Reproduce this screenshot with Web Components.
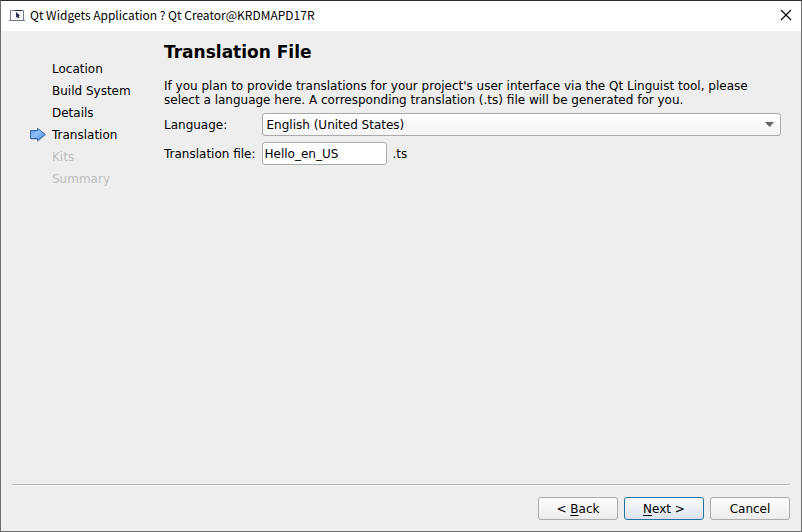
<!DOCTYPE html>
<html lang="en">
<head>
<meta charset="utf-8">
<title>Qt Widgets Application</title>
<style>
html, body { height: 100%; margin: 0; }
body { font: 12px/14px "DejaVu Sans", sans-serif; color: #000; background: #eee; }
</style>
</head>
<body>
<wizard-window>
  <title-bar slot="title">Qt Widgets Application ? Qt Creator@KRDMAPD17R</title-bar>
  <step-list slot="steps">
    <wizard-step>Location</wizard-step>
    <wizard-step>Build System</wizard-step>
    <wizard-step>Details</wizard-step>
    <wizard-step current>Translation</wizard-step>
    <wizard-step pending>Kits</wizard-step>
    <wizard-step pending>Summary</wizard-step>
  </step-list>
  <translation-page></translation-page>
  <wizard-button slot="actions">&lt; <u>B</u>ack</wizard-button>
  <wizard-button slot="actions" primary><u>N</u>ext &gt;</wizard-button>
  <wizard-button slot="actions">Cancel</wizard-button>
</wizard-window>
<script>
const define = (name, html) => {
  const template = document.createElement('template');
  template.innerHTML = html;
  customElements.define(name, class extends HTMLElement {
    constructor() {
      super();
      this.attachShadow({ mode: 'open' }).append(template.content.cloneNode(true));
    }
  });
};

define('wizard-window', `
<style>
:host { display: flex; flex-direction: column; min-height: 100vh; box-sizing: border-box;
  border: 1px solid #6e6e6e; border-top-color: #2b2a2c; background: #eee; }
.body { flex: 1; display: grid; grid-template-columns: 132px minmax(0, 1fr); gap: 0 20px; padding: 11px 20px 0 11px; }
footer { margin: 0 11px; padding: 12px 0 11px; display: flex; justify-content: flex-end; gap: 6px;
  border-top: 1px solid #b4b4b4; box-shadow: inset 0 1px #fff; }
</style>
<slot name="title"></slot>
<div class="body"><slot name="steps"></slot><main><slot></slot></main></div>
<footer><slot name="actions"></slot></footer>`);

define('title-bar', `
<style>
:host { display: flex; align-items: center; height: 28px; padding: 0 9px 2px 8px; background: #fff;
  font-family: "Noto Sans CJK KR", sans-serif; font-size: 12px; line-height: 16px; }
span { flex: 1; margin-left: 5px; }
button { border: 0; padding: 0; background: none; width: 12px; height: 12px; }
svg { display: block; }
</style>
<svg width="16" height="12" viewBox="0 0 16 12" aria-hidden="true">
  <path d="M1.500 11V1.500h13V11" fill="#f6f8fa" stroke="#737d90"/>
  <path d="M6 1h7v1H6z" fill="#27344c"/>
  <path d="M0 11h16v1H0z" fill="#737d90"/>
  <path d="M7 3l4 3.500-1.300.500.8 1.800-1.500.700-.8-1.800L7 8.500z" fill="#27344c"/>
</svg>
<span><slot></slot></span>
<button type="button" aria-label="Close"><svg width="12" height="12" viewBox="0 0 12 12"><path d="M1 1l10 10M11 1L1 11" stroke="#000" stroke-width="1.100" fill="none"/></svg></button>`);

define('step-list', `
<style>
nav { display: grid; gap: 8px; padding: 20px 0 0 17px; }
</style>
<nav aria-label="Steps"><slot></slot></nav>`);

define('wizard-step', `
<style>
:host { display: grid; grid-template-columns: 17px 1fr; gap: 6px; align-items: center; height: 14px; }
:host([pending]) { color: #bebebe; }
svg { visibility: hidden; display: block; }
:host([current]) svg { visibility: visible; }
</style>
<svg width="17" height="14" viewBox="0 0 17 14" aria-hidden="true">
  <defs><linearGradient id="blue" x1="0" y1="0" x2="1" y2="1"><stop offset="0" stop-color="#5a9cf0"/><stop offset=".45" stop-color="#8fbffa"/><stop offset="1" stop-color="#3f86e8"/></linearGradient></defs>
  <path d="M1.500 11.500h7.500v2l7.500-6" fill="none" stroke="#c8c8c8"/>
  <path d="M1.500 2.500h7V.3L16.300 6.500 8.500 12.700v-2.200h-7z" fill="url(#blue)" stroke="#36639f"/>
</svg>
<span><slot></slot></span>`);

define('translation-page', `
<style>
:host { display: block; }
h1 { font-size: 17px; line-height: 20px; margin: 0 0 17px; }
p { margin: 0 0 6px; max-width: 600px; }
form { display: grid; grid-template-columns: auto minmax(0, 1fr); gap: 6px; align-items: center; }
.combo { position: relative; }
select, input { font: inherit; color: inherit; box-sizing: border-box; height: 23px; margin: 0;
  border: 1px solid #ababab; border-radius: 3px; display: block; }
select { appearance: none; width: 100%; padding: 0 24px 0 4px; background: linear-gradient(#fff, #f4f4f4); }
.combo svg { position: absolute; right: 7px; top: 9px; pointer-events: none; }
input { width: 125px; padding: 0 2px; background: #fff; }
.file { display: flex; align-items: center; gap: 6px; }
</style>
<h1>Translation File</h1>
<p>If you plan to provide translations for your project's user interface via the Qt Linguist tool, please select a language here. A corresponding translation (.ts) file will be generated for you.</p>
<form>
  <label for="language">Language:</label>
  <div class="combo">
    <select id="language"><option>English (United States)</option></select>
    <svg width="9" height="5" viewBox="0 0 9 5" aria-hidden="true"><path d="M0 0h9L4.500 5z" fill="#666"/></svg>
  </div>
  <label for="file">Translation file:</label>
  <div class="file"><input id="file" type="text" value="Hello_en_US" spellcheck="false"><span>.ts</span></div>
</form>`);

define('wizard-button', `
<style>
:host { display: block; width: 80px; }
button { font: inherit; color: inherit; width: 100%; height: 23px; padding: 0; box-sizing: border-box;
  border: 1px solid #ababab; border-radius: 3px; background: linear-gradient(#fefefe, #ececec); }
:host([primary]) button { border-color: #2374a5; background: linear-gradient(#fcfdfe, #dae3ed); }
::slotted(u) { text-underline-offset: 2px; }
</style>
<button type="button"><slot></slot></button>`);
</script>
</body>
</html>
